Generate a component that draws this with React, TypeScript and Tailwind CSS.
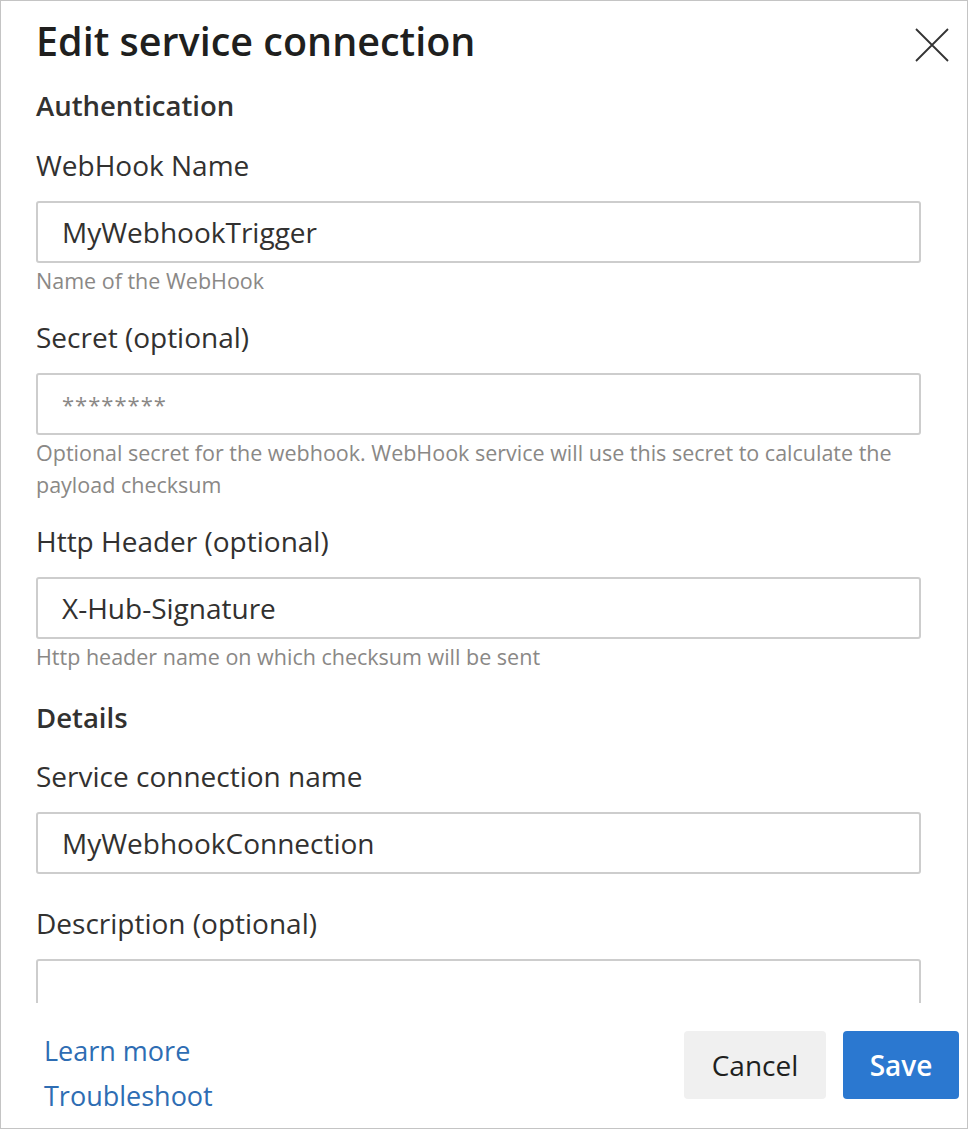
type FieldProps = {
  label: string
  value?: string
  placeholder?: string
  helper?: string
}

const Field = ({ label, value, placeholder, helper }: FieldProps) => {
  return (
    <div className="flex flex-col">
      <label className="text-[28px] leading-[40px] text-[#323130] mb-[16px]">
        {label}
      </label>

      <div className="h-[62px] border-2 border-[#cdcdcd] rounded-[3px] flex items-center px-[24px]">
        {value ? (
          <span className="text-[28px] text-[#323130]">{value}</span>
        ) : (
          <span className="text-[22px] tracking-[1px] text-[#8a8886]">{placeholder}</span>
        )}
      </div>

      {helper && (
        <p className="text-[21.5px] leading-[32px] text-[#8a8886] mt-[2px]">
          {helper}
        </p>
      )}
    </div>
  )
}

const App = () => {
  return (
    <div
      className="w-[968px] h-[1129px] bg-white border border-[#c4c4c4] flex flex-col overflow-hidden"
      style={{ fontFamily: '"Open Sans", "Noto Sans", sans-serif' }}
    >
      {/* HEADER */}
      <div className="flex items-start justify-between pl-[35px] pr-[18px] pt-[12px]">
        <h1 className="text-[39.5px] leading-[56px] font-semibold text-[#201f1e]">
          Edit service connection
        </h1>
        <button className="mt-[15px] text-[#333333]">
          <svg width="34" height="34" viewBox="0 0 34 34" fill="none" stroke="currentColor" strokeWidth="1.8">
            <path d="M1 1L33 33M33 1L1 33" />
          </svg>
        </button>
      </div>

      {/* FORM */}
      <div className="flex-1 overflow-hidden pl-[35px] pr-[46px] pt-[17px]">
        <h2 className="text-[27.5px] leading-[40px] font-semibold text-[#323130] mb-[19px]">
          Authentication
        </h2>

        <div className="flex flex-col gap-[20px]">
          <Field label="WebHook Name" value="MyWebhookTrigger" helper="Name of the WebHook" />
          <Field
            label="Secret (optional)"
            placeholder="********"
            helper="Optional secret for the webhook. WebHook service will use this secret to calculate the payload checksum"
          />
          <Field
            label="Http Header (optional)"
            value="X-Hub-Signature"
            helper="Http header name on which checksum will be sent"
          />
        </div>

        <h2 className="text-[27.5px] leading-[40px] font-semibold text-[#323130] mt-[25px] mb-[18px]">
          Details
        </h2>

        <div className="flex flex-col gap-[29px]">
          <Field label="Service connection name" value="MyWebhookConnection" />
          <Field label="Description (optional)" />
        </div>
      </div>

      {/* FOOTER */}
      <div className="h-[125px] flex items-start justify-between pl-[43px] pr-[8px] pt-[25px]">
        <div className="flex flex-col text-[27px] leading-[45px] text-[#2e6db3]">
          <a>Learn more</a>
          <a>Troubleshoot</a>
        </div>

        <div className="flex gap-[17px] pt-[3px]">
          <button className="w-[142px] h-[68px] rounded-[4px] bg-[#f0f0f0] text-[28px] text-[#201f1e]">
            Cancel
          </button>
          <button className="w-[116px] h-[68px] rounded-[4px] bg-[#2b78d0] text-[28px] font-semibold text-white">
            Save
          </button>
        </div>
      </div>
    </div>
  )
}

export default App
